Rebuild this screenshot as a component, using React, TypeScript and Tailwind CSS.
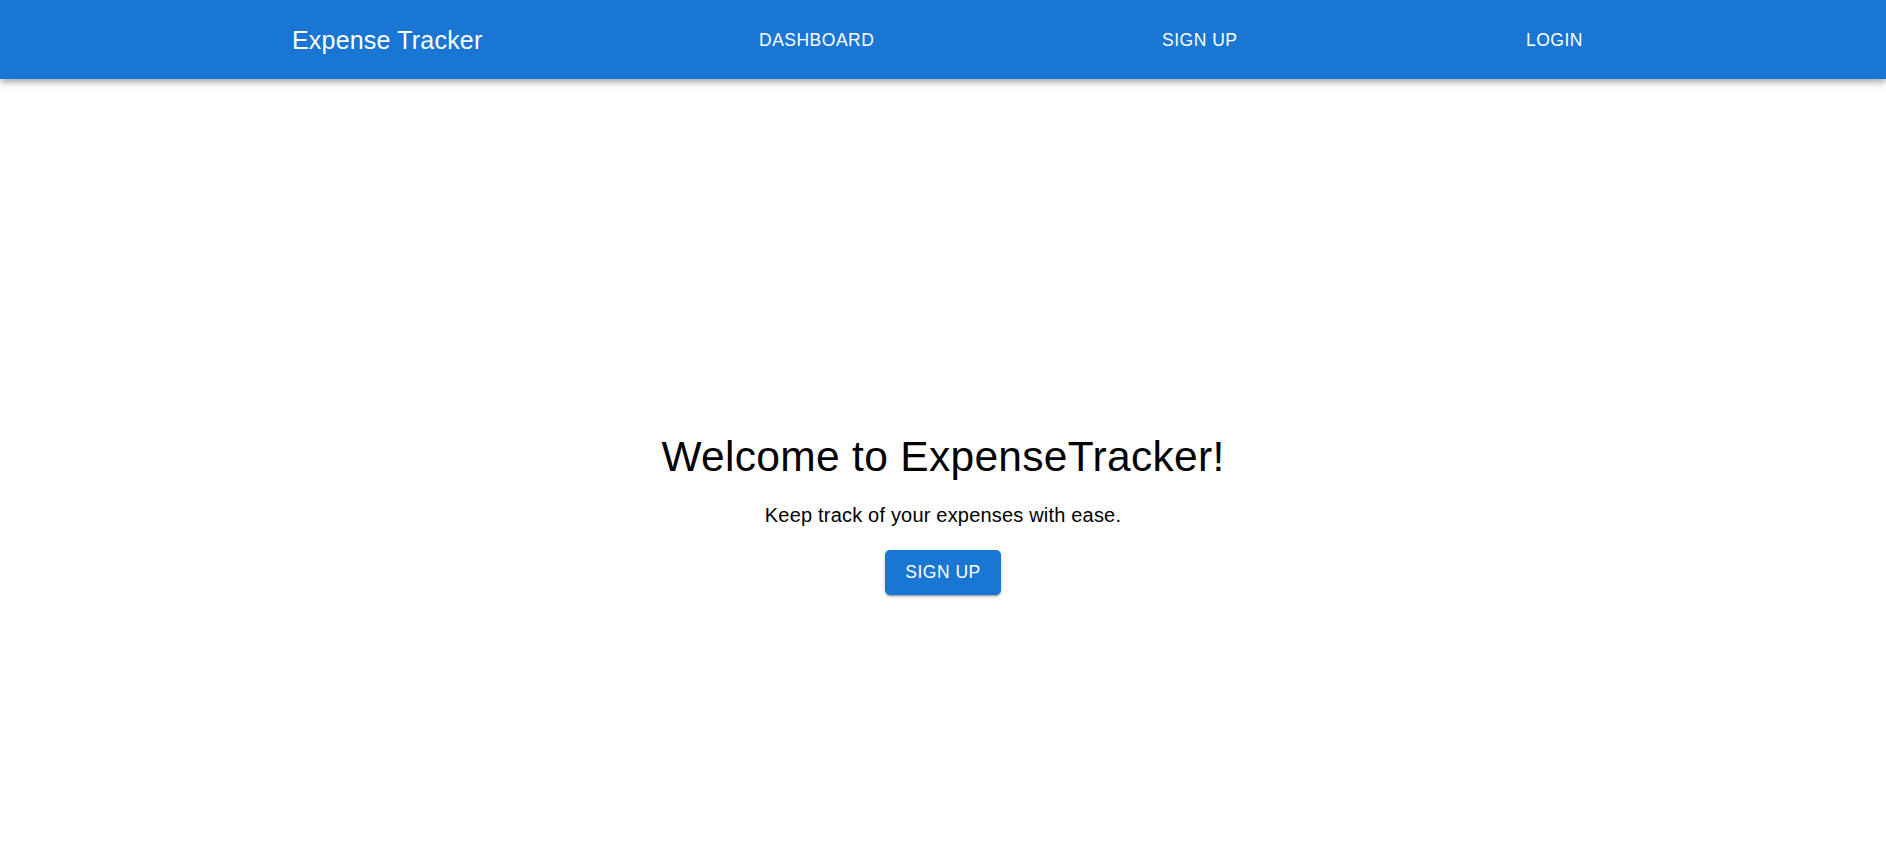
const navLinks = ["DASHBOARD", "SIGN UP", "LOGIN"];

const App = () => {
  return (
    <div className="min-h-[861px] bg-white font-['Liberation_Sans',Arial,sans-serif]">
      <header className="relative z-10 h-[79px] bg-[#1976d2] text-white shadow-[0px_2px_5px_-1px_rgba(0,0,0,0.2),0px_5px_6px_0px_rgba(0,0,0,0.14),0px_1px_12px_0px_rgba(0,0,0,0.12)]">
        <div className="grid h-full grid-cols-[457px_403px_364px_auto] items-center pl-[292px]">
          <p className="text-[25px] leading-[40px] tracking-[0.19px]">Expense Tracker</p>
          {navLinks.map((link) => (
            <div key={link}>
              <button className="rounded-[5px] px-[10px] py-[7px] text-[17.5px] leading-[30px] tracking-[0.5px] text-white">
                {link}
              </button>
            </div>
          ))}
        </div>
      </header>

      <main className="flex flex-col items-center pt-[352px] text-black">
        <h1 className="text-[42.5px] leading-[52.5px] tracking-[0.31px]">
          Welcome to ExpenseTracker!
        </h1>
        <p className="mt-[16px] text-[20px] leading-[30px] tracking-[0.19px]">
          Keep track of your expenses with ease.
        </p>
        <button className="mt-[20px] h-[45px] rounded-[5px] bg-[#1976d2] px-[20px] text-[17.5px] tracking-[0.5px] text-white shadow-[0px_3px_1px_-2px_rgba(0,0,0,0.2),0px_2px_2px_0px_rgba(0,0,0,0.14),0px_1px_5px_0px_rgba(0,0,0,0.12)]">
          SIGN UP
        </button>
      </main>
    </div>
  );
};

export default App;
